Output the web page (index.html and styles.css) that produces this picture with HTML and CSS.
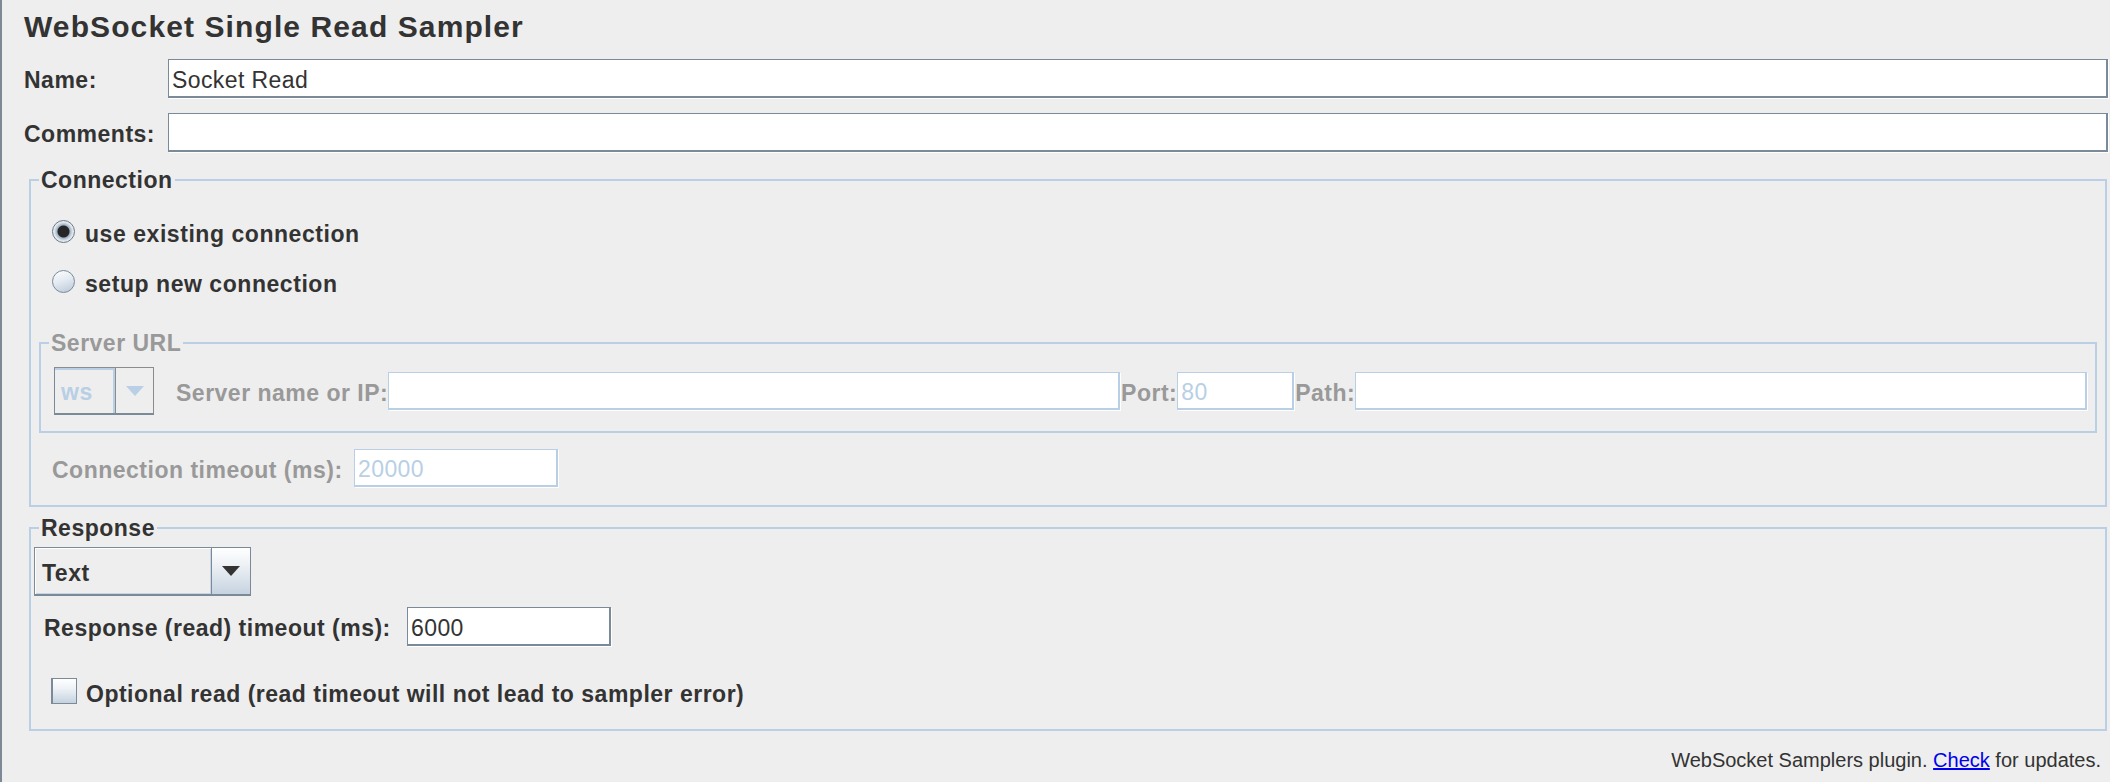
FILE: index.html
```html
<!DOCTYPE html>
<html lang="en">
<head>
<meta charset="utf-8">
<title>WebSocket Single Read Sampler</title>
<link rel="stylesheet" href="styles.css">
</head>
<body>
<div class="panel">
  <h1 class="title">WebSocket Single Read Sampler</h1>

  <div class="form-row row-name">
    <span class="lbl">Name:</span>
    <div class="field">Socket Read</div>
  </div>
  <div class="form-row row-comments">
    <span class="lbl">Comments:</span>
    <div class="field"></div>
  </div>

  <fieldset class="group group-connection">
    <legend>Connection</legend>
    <div class="option option-first">
      <span class="radio checked"></span>
      <span class="opt-text">use existing connection</span>
    </div>
    <div class="option option-second">
      <span class="radio"></span>
      <span class="opt-text">setup new connection</span>
    </div>

    <fieldset class="group group-server">
      <legend>Server URL</legend>
      <div class="server-row">
        <div class="combo combo-off">
          <span class="combo-value">ws</span>
          <span class="combo-btn">
            <svg width="18" height="10" viewBox="0 0 18 10"><polygon points="0,0 18,0 9,10" fill="#b8cfe5"/></svg>
          </span>
        </div>
        <span class="lbl off lbl-server">Server name or IP:</span>
        <div class="field off grow"></div>
        <span class="lbl off lbl-small">Port:</span>
        <div class="field off port">80</div>
        <span class="lbl off lbl-small">Path:</span>
        <div class="field off grow"></div>
      </div>
    </fieldset>

    <div class="conn-timeout">
      <span class="lbl off lbl-ct">Connection timeout (ms):</span>
      <div class="field off num">20000</div>
    </div>
  </fieldset>

  <fieldset class="group group-response">
    <legend>Response</legend>
    <div class="combo combo-on">
      <span class="combo-value">Text</span>
      <span class="combo-btn">
        <svg width="18" height="10" viewBox="0 0 18 10"><polygon points="0,0 18,0 9,10" fill="#333333"/></svg>
      </span>
    </div>
    <div class="resp-timeout">
      <span class="lbl lbl-rt">Response (read) timeout (ms):</span>
      <div class="field num">6000</div>
    </div>
    <div class="check-row">
      <span class="checkbox"></span>
      <span class="opt-text check-text">Optional read (read timeout will not lead to sampler error)</span>
    </div>
  </fieldset>

  <div class="footer">WebSocket Samplers plugin. <a href="#" class="link">Check</a> for updates.</div>
</div>
</body>
</html>
```

FILE: styles.css
```css
html, body {
  margin: 0;
  background: #eeeeee;
}

body {
  font-family: "Liberation Sans", Arial, Helvetica, sans-serif;
  color: #333333;
  width: 2110px;
  height: 782px;
  overflow: hidden;
}

.panel {
  box-sizing: border-box;
  height: 782px;
  border-left: 2px solid #7c8895;
  padding: 9px 2px 0 0;
}

.title {
  margin: 0 0 0 22px;
  height: 36px;
  font-size: 30px;
  line-height: 36px;
  font-weight: bold;
  letter-spacing: 1.1px;
}

/* label / field rows */
.form-row {
  display: grid;
  grid-template-columns: 144px 1fr;
  align-items: center;
  height: 39px;
  margin-left: 22px;
}

.row-name { margin-top: 14px; }
.row-comments { margin-top: 15px; }

.lbl {
  font-size: 23px;
  font-weight: bold;
  line-height: 26px;
  letter-spacing: 0.5px;
  padding-top: 3px;
  white-space: nowrap;
}

.lbl.off { color: #999999; }

.field {
  box-sizing: border-box;
  height: 39px;
  background: #ffffff;
  border-style: solid;
  border-color: #7a8a99;
  border-width: 1px 2px 2px 1px;
  box-shadow: 1px 1px 0 #ffffff;
  padding: 3px 0 0 3px;
  display: flex;
  align-items: center;
  font-size: 23px;
  line-height: 26px;
  letter-spacing: 0.4px;
  white-space: nowrap;
  overflow: hidden;
}

.field.off {
  height: 38px;
  border-color: #b8cfe5;
  color: #b8cfe5;
}

.field.grow { flex: 1 1 0; min-width: 0; }
.field.port { width: 117px; flex: none; }
.field.num { width: 204px; flex: none; }

/* group boxes */
.group {
  margin: 0;
  padding: 0;
  border: 2px solid #b8cfe5;
  min-width: 0;
}

.group > legend {
  margin-left: 8px;
  padding: 0 2px;
  font-size: 23px;
  font-weight: bold;
  line-height: 26px;
  letter-spacing: 0.5px;
}

.group-connection {
  margin: 15px 1px 0 27px;
  padding-bottom: 18px;
}

.group-server {
  margin: 33px 8px 0 8px;
  padding-bottom: 16px;
}

.group-server > legend { color: #999999; }

.group-response {
  margin: 8px 1px 0 27px;
  padding-bottom: 22px;
}

/* radio options */
.option {
  display: flex;
  align-items: flex-start;
  padding-left: 21px;
}

.option-first { margin-top: 27px; }
.option-second { margin-top: 23px; }

.opt-text {
  margin-left: 10px;
  margin-top: 1px;
  font-size: 23px;
  font-weight: bold;
  line-height: 26px;
  letter-spacing: 0.55px;
  white-space: nowrap;
}

.radio {
  flex: none;
  box-sizing: border-box;
  width: 23px;
  height: 23px;
  border-radius: 50%;
  border: 1px solid #7a8a99;
  background: linear-gradient(160deg, #ffffff 0%, #e4ebf2 45%, #b9c8d7 100%);
}

.radio.checked {
  border-color: #6b7783;
  background: radial-gradient(circle at 50% 50%, #262626 0, #262626 5.5px, #9fb0c1 6.5px, #d9e2eb 9px, #f4f7fa 11px);
}

/* server url row */
.server-row {
  display: flex;
  align-items: center;
  height: 48px;
  margin: 11px 8px 0 13px;
}

.lbl-server { margin-left: 22px; }
.lbl-small { margin-left: 1px; }

/* combo boxes */
.combo {
  display: flex;
  box-sizing: border-box;
  flex: none;
}

.combo-value {
  flex: 1;
  display: flex;
  align-items: center;
  box-sizing: border-box;
  font-size: 23px;
  font-weight: bold;
  line-height: 26px;
  letter-spacing: 0.5px;
  padding-top: 3px;
}

.combo-btn {
  flex: none;
  display: flex;
  align-items: center;
  justify-content: center;
  box-sizing: border-box;
}

.combo-off {
  width: 100px;
  height: 48px;
  border: 1px solid #8c8c8c;
  border-left-color: #7a8a99;
  border-bottom: 2px solid #7a8a99;
}

.combo-off .combo-value {
  color: #b8cfe5;
  padding-left: 6px;
  box-shadow: inset -2px 0 0 #b8cfe5, inset 0 2px 0 #b8cfe5;
}

.combo-off .combo-btn {
  width: 38px;
  border-left: 1px solid #8c8c8c;
}

.combo-on {
  width: 217px;
  height: 49px;
  margin: 6px 0 0 3px;
  border: 1px solid #7a8a99;
  border-bottom-width: 2px;
}

.combo-on .combo-value {
  padding-left: 7px;
  color: #333333;
  box-shadow: inset 1px 1px 0 #ffffff, inset -1px -1px 0 #c8d6e4;
}

.combo-on .combo-btn {
  width: 39px;
  border-left: 1px solid #7a8a99;
  background: linear-gradient(180deg, #ffffff 0%, #eef2f6 35%, #c6d3e0 100%);
}

/* timeout rows */
.conn-timeout {
  display: flex;
  align-items: center;
  height: 38px;
  margin-top: 16px;
  padding-left: 21px;
}

.lbl-ct { width: 302px; flex: none; }

.resp-timeout {
  display: flex;
  align-items: center;
  height: 39px;
  margin-top: 11px;
  padding-left: 13px;
}

.lbl-rt { width: 363px; flex: none; }

/* checkbox */
.check-row {
  display: flex;
  align-items: flex-start;
  margin-top: 32px;
  padding-left: 20px;
}

.checkbox {
  flex: none;
  box-sizing: border-box;
  width: 26px;
  height: 26px;
  border: 1px solid #7a8a99;
  border-left-width: 2px;
  background: linear-gradient(180deg, #ffffff 0%, #eef2f6 40%, #c5d2df 100%);
}

.check-text {
  margin-left: 9px;
  margin-top: 3px;
  letter-spacing: 0.5px;
}

/* footer */
.footer {
  margin-top: 17px;
  padding-right: 7px;
  text-align: right;
  font-size: 20px;
  line-height: 24px;
  color: #333333;
  white-space: nowrap;
}

.link {
  color: #0000ee;
  text-decoration: underline;
}
```
